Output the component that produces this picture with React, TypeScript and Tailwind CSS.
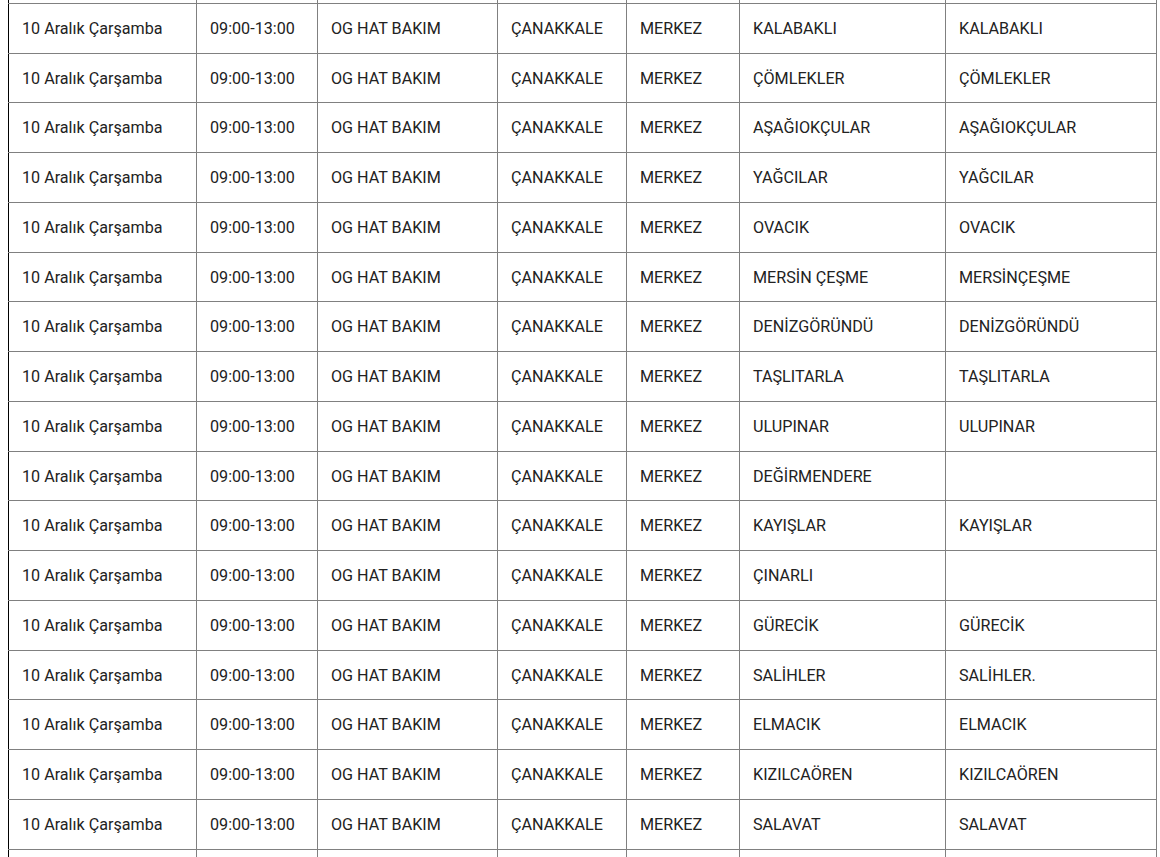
import React from "react";

const villages: [string, string][] = [
  ["KALABAKLI", "KALABAKLI"],
  ["ÇÖMLEKLER", "ÇÖMLEKLER"],
  ["AŞAĞIOKÇULAR", "AŞAĞIOKÇULAR"],
  ["YAĞCILAR", "YAĞCILAR"],
  ["OVACIK", "OVACIK"],
  ["MERSİN ÇEŞME", "MERSİNÇEŞME"],
  ["DENİZGÖRÜNDÜ", "DENİZGÖRÜNDÜ"],
  ["TAŞLITARLA", "TAŞLITARLA"],
  ["ULUPINAR", "ULUPINAR"],
  ["DEĞİRMENDERE", ""],
  ["KAYIŞLAR", "KAYIŞLAR"],
  ["ÇINARLI", ""],
  ["GÜRECİK", "GÜRECİK"],
  ["SALİHLER", "SALİHLER."],
  ["ELMACIK", "ELMACIK"],
  ["KIZILCAÖREN", "KIZILCAÖREN"],
  ["SALAVAT", "SALAVAT"],
];

const widths = [188, 121, 180, 129, 113, 206, 211];

const cell = "border border-[#808080] pl-[13px] pr-3 pt-[16px] pb-[14px] leading-[18.75px] whitespace-nowrap";

function Row({ cols, first }: { cols: string[]; first?: boolean }) {
  return (
    <tr>
      {cols.map((c, i) => (
        <td key={i} className={i === 0 ? cell + " border-l-black" : cell}>
          {first ? "\u00a0" : c}
        </td>
      ))}
    </tr>
  );
}

export default function App() {
  return (
    <div className="h-[857px] overflow-hidden bg-white font-['Roboto','Liberation_Sans',sans-serif] text-[16.15px] text-[#222]">
      <div className="pl-2 mt-[-47px]">
        <table className="table-fixed border-collapse w-[1148px]">
          <colgroup>
            {widths.map((w, i) => (
              <col key={i} style={{ width: w }} />
            ))}
          </colgroup>
          <tbody>
            {/* row above the fold, only its bottom edge shows */}
            <Row first cols={["", "", "", "", "", "", ""]} />
            {villages.map(([a, b], i) => (
              <Row
                key={i}
                cols={["10 Aralık Çarşamba", "09:00-13:00", "OG HAT BAKIM", "ÇANAKKALE", "MERKEZ", a, b]}
              />
            ))}
            <Row first cols={["", "", "", "", "", "", ""]} />
          </tbody>
        </table>
      </div>
    </div>
  );
}
